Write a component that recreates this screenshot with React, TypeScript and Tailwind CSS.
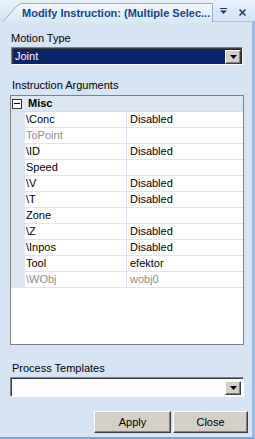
import React from "react";

const rows: { name: string; value: string; disabled?: boolean }[] = [
  { name: "\\Conc", value: "Disabled" },
  { name: "ToPoint", value: "", disabled: true },
  { name: "\\ID", value: "Disabled" },
  { name: "Speed", value: "" },
  { name: "\\V", value: "Disabled" },
  { name: "\\T", value: "Disabled" },
  { name: "Zone", value: "" },
  { name: "\\Z", value: "Disabled" },
  { name: "\\Inpos", value: "Disabled" },
  { name: "Tool", value: "efektor" },
  { name: "\\WObj", value: "wobj0", disabled: true },
];

function DropBtn() {
  return (
    <div className="w-[16px] h-[14px] bg-[#d4d0c8] border-t border-l border-t-[#ffffff] border-l-[#ffffff] border-b border-r border-b-[#404040] border-r-[#404040] flex items-center justify-center shadow-[inset_-1px_-1px_0_#808080]">
      <svg width="7" height="4" viewBox="0 0 7 4">
        <path d="M0 0 H7 L3.5 4 Z" fill="#000" />
      </svg>
    </div>
  );
}

export default function App() {
  return (
    <div
      className="w-[255px] h-[439px] flex flex-col bg-[#d6e4f3] text-[11px] text-black overflow-hidden"
      style={{ fontFamily: '"Liberation Sans", Arial, sans-serif' }}
    >
      {/* title */}
      <div className="relative h-[22px] bg-[#dce8f6] shrink-0">
        <svg className="absolute left-0 top-0" width="255" height="22" viewBox="0 0 255 22">
          <defs>
            <linearGradient id="tabg" x1="0" y1="0" x2="0" y2="1">
              <stop offset="0" stopColor="#f3f8fe" />
              <stop offset="1" stopColor="#dbe8f8" />
            </linearGradient>
            <linearGradient id="bgg" x1="0" y1="0" x2="0" y2="1">
              <stop offset="0" stopColor="#e8f0fa" />
              <stop offset="1" stopColor="#d3e2f4" />
            </linearGradient>
          </defs>
          <rect x="0" y="0" width="255" height="22" fill="url(#bgg)" />
          <path d="M2.5 22 L18 5 Q20 3.5 23 3.5 L212.5 3.5 L212.5 22" fill="url(#tabg)" stroke="#8cabd6" strokeWidth="1" />
          <line x1="213" y1="21.5" x2="255" y2="21.5" stroke="#a9c3e5" />
          <path d="M220 8.5 H227" stroke="#1e3b61" strokeWidth="1" />
          <path d="M220 10.5 H227 L223.5 14 Z" fill="#1e3b61" />
          <path d="M239.5 9.5 L245.5 15.5 M245.5 9.5 L239.5 15.5" stroke="#1e3b61" strokeWidth="1.6" />
        </svg>
        <div className="absolute left-[22px] top-[7px] text-[11px] font-bold text-[#15428b] leading-[13px] whitespace-nowrap">
          Modify Instruction: (Multiple Selec...
        </div>
      </div>

      {/* body */}
      <div className="flex-1 flex flex-col border-r-[3px] border-r-[#9ebbe2] border-b-[2px] border-b-[#7ea3d6] pl-[11px] pr-[8px]">
        <div className="mt-[10px] leading-[13px]">Motion Type</div>
        <div className="mt-[2px] h-[18px] w-[232px] flex border-t border-l border-t-[#808080] border-l-[#808080] border-b border-r border-b-white border-r-white">
          <div className="flex-1 flex items-center bg-[#0a246a] text-white pl-[2px] pr-[1px] border-t border-l border-t-[#404040] border-l-[#404040]">
            <span className="flex-1">Joint</span>
            <DropBtn />
          </div>
        </div>

        <div className="mt-[14px] leading-[13px] ml-[1px]">Instruction Arguments</div>
        <div className="mt-[3px] w-[234px] h-[250px] -ml-[1px] border border-[#808080] bg-white flex flex-col shrink-0">
          <div className="h-[16px] bg-[#dde7f4] flex items-center border-b border-b-[#d3dff0]">
            <div className="ml-[1px] w-[10px] h-[10px] border border-[#333] bg-white flex items-center justify-center">
              <div className="w-[6px] h-[1px] bg-black" />
            </div>
            <span className="ml-[6px] font-bold">Misc</span>
          </div>
          {rows.map((r) => (
            <div key={r.name} className="h-[16px] flex">
              <div className="w-[14px] bg-[#dde7f4]" />
              <div
                className={`w-[102px] pl-[1px] flex items-center border-b border-b-[#dae5f3] border-r border-r-[#dae5f3] ${
                  r.disabled ? "text-[#8d8d8d]" : ""
                }`}
              >
                {r.name}
              </div>
              <div
                className={`flex-1 pl-[3px] flex items-center border-b border-b-[#dae5f3] ${
                  r.disabled ? "text-[#8d8d8d]" : ""
                }`}
              >
                {r.value}
              </div>
            </div>
          ))}
        </div>

        <div className="mt-[17px] leading-[13px] ml-[1px]">Process Templates</div>
        <div className="mt-[2px] h-[20px] w-[234px] -ml-[1px] flex border-t border-l border-t-[#808080] border-l-[#808080] border-b border-r border-b-white border-r-white shrink-0">
          <div className="flex-1 flex items-center justify-end bg-white border-t border-l border-t-[#404040] border-l-[#404040] pr-[2px]">
            <DropBtn />
          </div>
        </div>

        <div className="mt-[14px] flex justify-end gap-[2px] mr-[-4px]">
          <button className="w-[77px] h-[22px] bg-[#d4d0c8] border border-t-white border-l-white border-b-[#404040] border-r-[#404040] shadow-[inset_-1px_-1px_0_#808080]">
            Apply
          </button>
          <button className="w-[75px] h-[22px] bg-[#d4d0c8] border border-t-white border-l-white border-b-[#404040] border-r-[#404040] shadow-[inset_-1px_-1px_0_#808080]">
            Close
          </button>
        </div>
      </div>
    </div>
  );
}
